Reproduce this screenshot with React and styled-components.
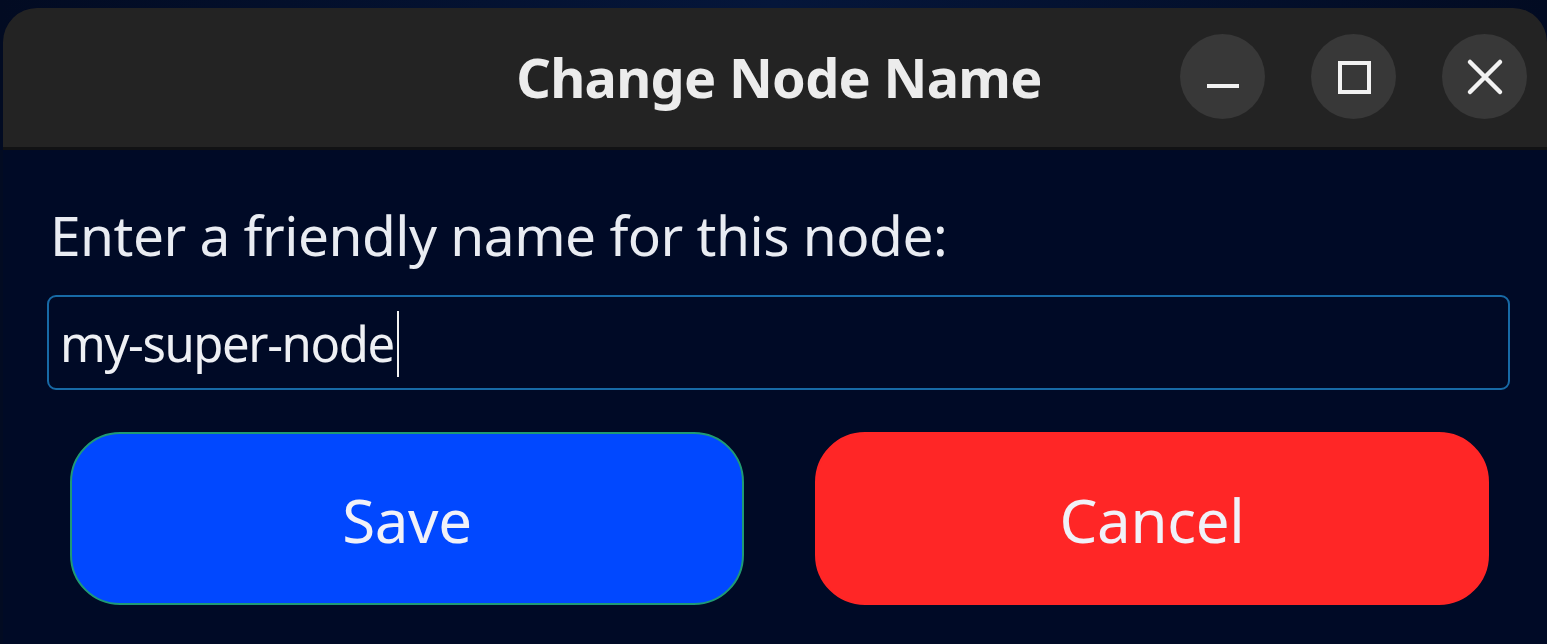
import React from "react";
import styled, { createGlobalStyle } from "styled-components";

const Global = createGlobalStyle`
  html, body { margin: 0; padding: 0; background: #03102a; }
  body { font-family: "Noto Sans", "Open Sans", sans-serif; overflow: hidden; }
  * { box-sizing: border-box; }
`;

const Desktop = styled.div`
  width: 1547px;
  height: 644px;
  padding: 8px 0 0 3px;
  background: linear-gradient(90deg, #020b22 0%, #05163a 50%, #020b22 100%);
  display: flex;
`;

const Window = styled.div`
  flex: 1;
  display: flex;
  flex-direction: column;
  background: #000a26;
  border-radius: 34px 34px 0 0;
  overflow: hidden;
`;

const TitleBar = styled.div`
  height: 142px;
  flex: none;
  background: #232323;
  border-bottom: 3px solid #111214;
  display: grid;
  grid-template-columns: 1fr auto 1fr;
  align-items: center;
  padding: 0 20px 0 0;
`;

const Title = styled.div`
  grid-column: 2;
  color: #ececec;
  font-weight: 700;
  font-size: 54px;
  letter-spacing: -0.7px;
  margin-top: -2px;
  margin-left: 28px;
`;

const Controls = styled.div`
  grid-column: 3;
  justify-self: end;
  display: flex;
  gap: 46px;
  margin-top: -2px;
`;

const CtrlButton = styled.div`
  width: 85px;
  height: 85px;
  border-radius: 50%;
  background: #383838;
  display: flex;
  align-items: center;
  justify-content: center;
  color: #f2f2f2;
`;

const Body = styled.div`
  flex: 1;
  display: flex;
  flex-direction: column;
  padding: 52px 37px 0 44px;
`;

const Label = styled.div`
  color: #e9ecf2;
  font-size: 55px;
  line-height: 66px;
  letter-spacing: -0.5px;
  margin-left: 3px;
`;

const InputBox = styled.div`
  margin-top: 27px;
  height: 95px;
  border: 2.5px solid #176aa6;
  border-radius: 9px;
  display: flex;
  align-items: center;
  padding: 0 0 0 11px;
  color: #eef0f4;
  font-size: 49px;
  letter-spacing: -1.4px;
`;

const Caret = styled.span`
  display: inline-block;
  width: 2.5px;
  height: 66px;
  background: #f2f2f2;
  margin-left: 3px;
  margin-top: 2px;
`;

const ButtonRow = styled.div`
  margin-top: 42px;
  display: flex;
  gap: 71px;
  padding: 0 21px 0 23px;
`;

const ActionButton = styled.div`
  flex: 1;
  height: 173px;
  border-radius: 50px;
  background: ${(p) => (p.$variant === "save" ? "#0148ff" : "#ff2626")};
  border: 2px solid ${(p) => (p.$variant === "save" ? "#1f9a74" : "#ff2626")};
  color: #f1f1f8;
  font-size: 60px;
  letter-spacing: -0.3px;
  display: flex;
  align-items: center;
  justify-content: center;
  padding-top: 2px;
`;

export default function App() {
  return (
    <>
      <Global />
      <Desktop>
        <Window>
          <TitleBar>
            <Title>Change Node Name</Title>
            <Controls>
              <CtrlButton>
                <svg width="40" height="40" viewBox="0 0 40 40">
                  <rect x="4" y="27" width="32" height="4" fill="currentColor" />
                </svg>
              </CtrlButton>
              <CtrlButton>
                <svg width="40" height="40" viewBox="0 0 40 40">
                  <rect x="6" y="6" width="29" height="29" fill="none" stroke="currentColor" strokeWidth="4" />
                </svg>
              </CtrlButton>
              <CtrlButton>
                <svg width="40" height="40" viewBox="0 0 40 40">
                  <path d="M5 5 L35 35 M35 5 L5 35" stroke="currentColor" strokeWidth="4.5" strokeLinecap="round" />
                </svg>
              </CtrlButton>
            </Controls>
          </TitleBar>
          <Body>
            <Label>Enter a friendly name for this node:</Label>
            <InputBox>
              my-super-node
              <Caret />
            </InputBox>
            <ButtonRow>
              <ActionButton $variant="save">Save</ActionButton>
              <ActionButton $variant="cancel">Cancel</ActionButton>
            </ButtonRow>
          </Body>
        </Window>
      </Desktop>
    </>
  );
}
